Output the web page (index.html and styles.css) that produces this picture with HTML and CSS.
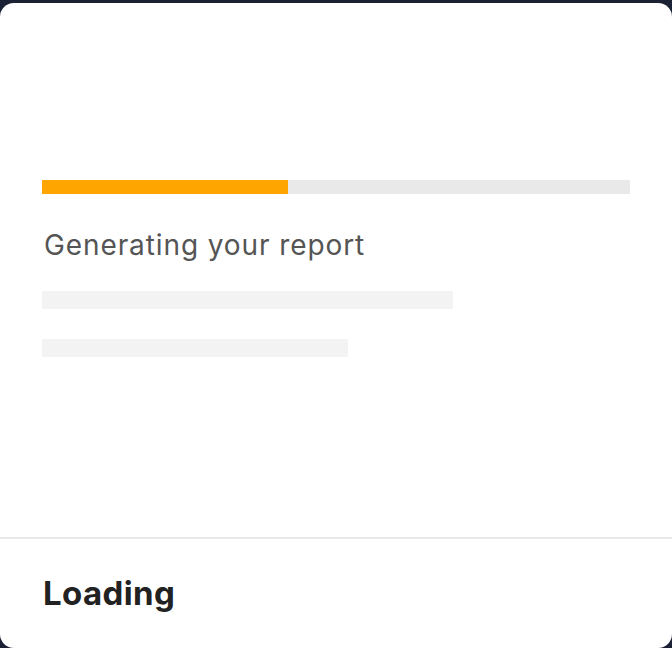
FILE: index.html
```html
<!DOCTYPE html>
<html lang="en">
<head>
<meta charset="utf-8">
<title>Loading</title>
<link rel="stylesheet" href="styles.css">
</head>
<body>
  <div class="card">
    <div class="card-body">
      <div class="progress">
        <div class="progress-fill" style="width: 41.9%"></div>
      </div>
      <p class="status">Generating your report</p>
      <div class="skeleton skeleton-long"></div>
      <div class="skeleton skeleton-short"></div>
    </div>
    <div class="card-footer">
      <h2 class="footer-title">Loading</h2>
    </div>
  </div>
</body>
</html>
```

FILE: styles.css
```css
html, body {
  margin: 0;
  padding: 0;
}

body {
  background: #1b2233;
  padding-top: 3px;
  font-family: Inter, "Noto Sans", "Liberation Sans", sans-serif;
  height: 648px;
  box-sizing: border-box;
  overflow: hidden;
}

.card {
  background: #ffffff;
  border-radius: 14px;
  height: 645px;
  display: flex;
  flex-direction: column;
  overflow: hidden;
}

.card-body {
  flex: 1;
  display: flex;
  flex-direction: column;
  padding: 177px 42px 0;
}

.progress {
  height: 14px;
  background: #e9e9e9;
  display: flex;
}

.progress-fill {
  height: 100%;
  background: #ffa500;
}

.status {
  margin: 34px 0 29px 2px;
  font-size: 28px;
  font-weight: 400;
  letter-spacing: 0.9px;
  color: #555555;
  line-height: normal;
}

.skeleton {
  height: 18px;
  background: #f3f3f3;
}

.skeleton-long {
  width: 69.9%;
  margin-bottom: 30px;
}

.skeleton-short {
  width: 52%;
}

.card-footer {
  border-top: 2px solid #e8e8e8;
  padding: 34px 42px 35px 43px;
}

.footer-title {
  margin: 0;
  font-size: 33px;
  font-weight: 700;
  letter-spacing: 0.4px;
  color: #222222;
  line-height: normal;
}
```
